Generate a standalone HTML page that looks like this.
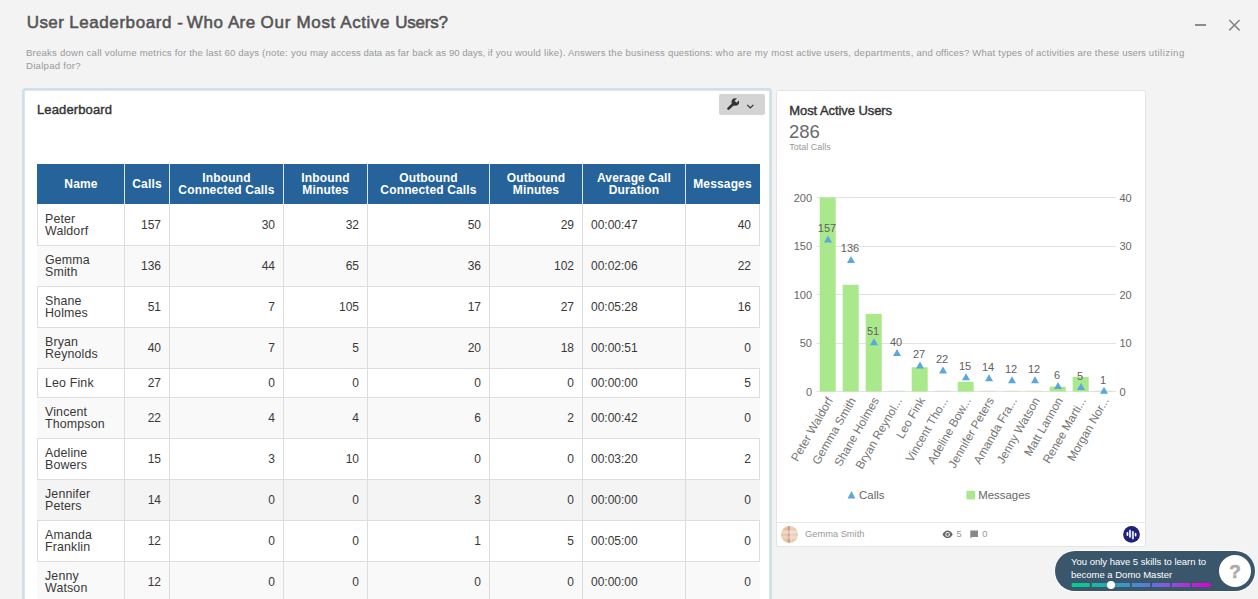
<!DOCTYPE html>
<html lang="en">
<head>
<meta charset="utf-8">
<title>User Leaderboard - Who Are Our Most Active Users?</title>
<style>
html,body{margin:0;padding:0;}
body{width:1258px;height:599px;overflow:hidden;background:#f3f3f3;font-family:"Liberation Sans",sans-serif;color:#333;position:relative;}
.abs{position:absolute;}
#title{left:26.8px;top:12px;font-size:17px;font-weight:normal;-webkit-text-stroke:0.55px #555;color:#555;white-space:nowrap;line-height:22px;}
#desc{left:26px;top:46px;width:1220px;font-size:9.6px;line-height:13px;color:#999;white-space:nowrap;}
.ds{display:inline-block;white-space:pre;vertical-align:top;}
#min{left:1195px;top:24px;width:11px;height:2px;background:#8c8c8c;}
#card1{left:24px;top:90px;width:744px;height:520px;background:#fff;border:1px solid #e2e4e6;border-radius:2px;box-shadow:0 0 0 2px #cde0ec;}
#card1 h3{position:absolute;left:12px;top:11.1px;letter-spacing:0.12px;margin:0;font-size:13px;font-weight:normal;-webkit-text-stroke:0.4px #333;color:#333;line-height:16px;white-space:nowrap;}
#wrench{left:694px;top:3px;width:46px;height:21px;background:#d4d4d4;border-radius:2px;}
#card2{left:776px;top:90px;width:368px;height:455px;background:#fff;border:1px solid #e3e5e5;border-radius:2px;}
table{position:absolute;left:12px;top:73px;border-collapse:collapse;table-layout:fixed;width:722px;font-size:12px;line-height:12px;}
th{background:#26639b;color:#fff;font-weight:bold;letter-spacing:0.15px;height:24px;padding:8px 4px;border-left:1px solid #dce6f0;text-align:center;vertical-align:middle;box-sizing:content-box;}
th:first-child{border-left:1px solid #26639b;}
th:last-child{border-right:1px solid #26639b;}
td{padding:8px 8px;border:1px solid #ddd;border-top:none;vertical-align:middle;text-align:right;color:#383838;}
td:first-child,td.l{text-align:left;}
tr.g td{background:#f9f9f9;}
tr.h td{background:#f4f4f4;}
tr.g td:last-child{border-right-color:#f9f9f9;}
tr.g td:first-child{border-left-color:#f9f9f9;}
tr.h td:last-child{border-right-color:#f4f4f4;}
tr.h td:first-child{border-left-color:#f4f4f4;}
.sb{-webkit-text-stroke:0.4px #333;}
tr.f td{padding-top:9px;}
td:first-child{font-size:12.4px;letter-spacing:0.15px;padding-left:7px;}
</style>
</head>
<body>
<div id="title" class="abs"><span class="ds" style="width:42.5px;letter-spacing:0.375px">User </span><span class="ds" style="width:107.9px;letter-spacing:0.563px">Leaderboard </span><span class="ds" style="width:9.6px;letter-spacing:-0.395px">- </span><span class="ds" style="width:41.1px;letter-spacing:0.587px">Who </span><span class="ds" style="width:32.7px;letter-spacing:0.378px">Are </span><span class="ds" style="width:36.0px;letter-spacing:0.734px">Our </span><span class="ds" style="width:43.7px;letter-spacing:0.615px">Most </span><span class="ds" style="width:55.0px;letter-spacing:0.567px">Active </span><span class="ds" style="width:51.7px;letter-spacing:-0.25px">Users?</span></div>
<div id="desc" class="abs"><span class="ds" style="width:113.7px;letter-spacing:0.205px">Breaks down call volume </span><span class="ds" style="width:122.4px;letter-spacing:0.175px">metrics for the last 60 days </span><span class="ds" style="width:47.9px;letter-spacing:0.232px">(note: you </span><span class="ds" style="width:87.8px;letter-spacing:0.018px">may access data as </span><span class="ds" style="width:51.3px;letter-spacing:0.142px">far back as </span><span class="ds" style="width:38.6px;letter-spacing:-0.038px">90 days, </span><span class="ds" style="width:80.4px;letter-spacing:0.233px">if you would like). </span><span class="ds" style="width:40.3px;letter-spacing:0.106px">Answers </span><span class="ds" style="width:17.2px;letter-spacing:0.296px">the </span><span class="ds" style="width:42.4px;letter-spacing:0.208px">business </span><span class="ds" style="width:47.7px;letter-spacing:0.118px">questions: </span><span class="ds" style="width:55.6px;letter-spacing:0.303px">who are my </span><span class="ds" style="width:25.0px;letter-spacing:0.306px">most </span><span class="ds" style="width:27.9px;letter-spacing:0.024px">active </span><span class="ds" style="width:29.8px;letter-spacing:0.143px">users, </span><span class="ds" style="width:62.7px;letter-spacing:0.310px">departments, </span><span class="ds" style="width:19.1px;letter-spacing:0.103px">and </span><span class="ds" style="width:36.5px;letter-spacing:0.104px">offices? </span><span class="ds" style="width:26.2px;letter-spacing:0.228px">What </span><span class="ds" style="width:37.7px;letter-spacing:0.159px">types of </span><span class="ds" style="width:58.7px;letter-spacing:0.181px">activities are </span><span class="ds" style="width:27.6px;letter-spacing:0.243px">these </span><span class="ds" style="width:26.3px;letter-spacing:0.027px">users </span><span class="ds" style="width:34.6px;letter-spacing:0.45px">utilizing</span><br><span style="letter-spacing:0.26px">Dialpad for?</span></div>
<div id="min" class="abs"></div>
<svg class="abs" style="left:1228px;top:19px" width="13" height="13" viewBox="0 0 13 13"><path d="M1.2 1L11.6 11.4M11.6 1L1.2 11.4" stroke="#858585" stroke-width="1.5" fill="none"/></svg>

<div id="card1" class="abs">
<h3>Leaderboard</h3>
<div id="wrench" class="abs"><svg style="position:absolute;left:7px;top:3px" width="15" height="15" viewBox="0 0 15 15"><path d="M9.3 5L2.5 11.6" stroke="#333" stroke-width="2.7" stroke-linecap="round" fill="none"/><circle cx="9.3" cy="5" r="3.8" fill="#333"/><rect x="9.7" y="3.55" width="5" height="2.9" transform="rotate(-45 9.3 5)" fill="#d4d4d4"/></svg><svg style="position:absolute;left:27px;top:9px" width="9" height="7" viewBox="0 0 9 7"><path d="M1.2 1.9L4.3 4.9L7.4 1.9" stroke="#333" stroke-width="1.3" fill="none"/></svg></div>
<table>
<colgroup><col style="width:87px"><col style="width:45px"><col style="width:114px"><col style="width:84px"><col style="width:122px"><col style="width:93px"><col style="width:103px"><col style="width:74px"></colgroup>
<tr><th>Name</th><th>Calls</th><th>Inbound<br>Connected Calls</th><th>Inbound<br>Minutes</th><th>Outbound<br>Connected Calls</th><th>Outbound<br>Minutes</th><th>Average Call<br>Duration</th><th>Messages</th></tr>
<tr class="f"><td>Peter<br>Waldorf</td><td>157</td><td>30</td><td>32</td><td>50</td><td>29</td><td class="l">00:00:47</td><td>40</td></tr>
<tr class="g"><td>Gemma<br>Smith</td><td>136</td><td>44</td><td>65</td><td>36</td><td>102</td><td class="l">00:02:06</td><td>22</td></tr>
<tr><td>Shane<br>Holmes</td><td>51</td><td>7</td><td>105</td><td>17</td><td>27</td><td class="l">00:05:28</td><td>16</td></tr>
<tr class="g"><td>Bryan<br>Reynolds</td><td>40</td><td>7</td><td>5</td><td>20</td><td>18</td><td class="l">00:00:51</td><td>0</td></tr>
<tr><td>Leo Fink</td><td>27</td><td>0</td><td>0</td><td>0</td><td>0</td><td class="l">00:00:00</td><td>5</td></tr>
<tr class="g"><td>Vincent<br>Thompson</td><td>22</td><td>4</td><td>4</td><td>6</td><td>2</td><td class="l">00:00:42</td><td>0</td></tr>
<tr><td>Adeline<br>Bowers</td><td>15</td><td>3</td><td>10</td><td>0</td><td>0</td><td class="l">00:03:20</td><td>2</td></tr>
<tr class="g h"><td>Jennifer<br>Peters</td><td>14</td><td>0</td><td>0</td><td>3</td><td>0</td><td class="l">00:00:00</td><td>0</td></tr>
<tr><td>Amanda<br>Franklin</td><td>12</td><td>0</td><td>0</td><td>1</td><td>5</td><td class="l">00:05:00</td><td>0</td></tr>
<tr class="g"><td>Jenny<br>Watson</td><td>12</td><td>0</td><td>0</td><td>0</td><td>0</td><td class="l">00:00:00</td><td>0</td></tr>
</table>
</div>

<div id="card2" class="abs"></div>
<div class="abs sb" style="left:789.3px;top:103px;font-size:13px;line-height:16px;color:#333;white-space:nowrap;letter-spacing:-0.08px;">Most Active Users</div>
<div class="abs" style="left:789px;top:120.6px;font-size:18.5px;line-height:21px;color:#6a6a6a;white-space:nowrap;">286</div>
<div class="abs" style="left:789.2px;top:142px;font-size:9px;line-height:11px;color:#999;white-space:nowrap;">Total Calls</div>
<svg class="abs" style="left:0;top:0" width="1258" height="599" viewBox="0 0 1258 599" font-family="Liberation Sans, sans-serif">
<g stroke="#e2e2e2" stroke-width="1">
<line x1="816.5" x2="1116.2" y1="197.50" y2="197.50"/>
<line x1="816.5" x2="1116.2" y1="246.5" y2="246.5"/>
<line x1="816.5" x2="1116.2" y1="294.50" y2="294.50"/>
<line x1="816.5" x2="1116.2" y1="343.5" y2="343.5"/>
<line x1="816.5" x2="1116.2" y1="391.50" y2="391.50"/>
</g>
<g font-size="11" fill="#666">
<text x="812" y="201.50" text-anchor="end">200</text><text x="1119.5" y="201.50">40</text>
<text x="812" y="250.4" text-anchor="end">150</text><text x="1119.5" y="250.4">30</text>
<text x="812" y="298.50" text-anchor="end">100</text><text x="1119.5" y="298.50">20</text>
<text x="812" y="347.4" text-anchor="end">50</text><text x="1119.5" y="347.4">10</text>
<text x="812" y="395.50" text-anchor="end">0</text><text x="1119.5" y="395.50">0</text>
</g>
<g fill="#a9e98c">
<rect x="819.7" y="197.50" width="16" height="194.00"/>
<rect x="842.7" y="284.80" width="16" height="106.70"/>
<rect x="865.7" y="313.90" width="16" height="77.60"/>
<rect x="888.7" y="390.6" width="16" height="0.5" opacity="0.6"/>
<rect x="911.7" y="367.25" width="16" height="24.25"/>
<rect x="934.7" y="390.6" width="16" height="0.5" opacity="0.6"/>
<rect x="957.7" y="381.80" width="16" height="9.70"/>
<rect x="980.7" y="390.6" width="16" height="0.5" opacity="0.6"/>
<rect x="1003.7" y="390.6" width="16" height="0.5" opacity="0.6"/>
<rect x="1026.7" y="390.6" width="16" height="0.5" opacity="0.6"/>
<rect x="1049.7" y="386.65" width="16" height="4.85"/>
<rect x="1072.7" y="376.95" width="16" height="14.55"/>
<rect x="1095.7" y="390.6" width="16" height="0.5" opacity="0.6"/>
</g>
<g fill="#5aa8dc"><path d="M824.0 242.51L832.0 242.51L828 235.51Z"/><path d="M847.0 262.88L855.0 262.88L851 255.88Z"/><path d="M870.0 345.33L878.0 345.33L874 338.33Z"/><path d="M893.0 356.00L901.0 356.00L897 349.00Z"/><path d="M916.0 368.61L924.0 368.61L920 361.61Z"/><path d="M939.0 373.46L947.0 373.46L943 366.46Z"/><path d="M962.0 380.25L970.0 380.25L966 373.25Z"/><path d="M985.0 381.22L993.0 381.22L989 374.22Z"/><path d="M1008.0 383.16L1016.0 383.16L1012 376.16Z"/><path d="M1031.0 383.16L1039.0 383.16L1035 376.16Z"/><path d="M1054.0 388.98L1062.0 388.98L1058 381.98Z"/><path d="M1077.0 389.95L1085.0 389.95L1081 382.95Z"/><path d="M1100.0 393.83L1108.0 393.83L1104 386.83Z"/></g>
<g font-size="11" fill="#606060" text-anchor="middle"><text x="827" y="232.31">157</text><text x="850" y="251.88">136</text><text x="873" y="335.13">51</text><text x="896" y="345.80">40</text><text x="919" y="358.41">27</text><text x="942" y="363.26">22</text><text x="965" y="370.05">15</text><text x="988" y="371.02">14</text><text x="1011" y="372.96">12</text><text x="1034" y="372.96">12</text><text x="1057" y="378.78">6</text><text x="1080" y="379.75">5</text><text x="1103" y="383.63">1</text></g>
<g font-size="11.8" fill="#757575" text-anchor="end">
<text transform="translate(833.4 400.2) rotate(-60)">Peter Waldorf</text>
<text transform="translate(856.4 400.2) rotate(-60)">Gemma Smith</text>
<text transform="translate(879.4 400.2) rotate(-60)">Shane Holmes</text>
<text transform="translate(902.4 400.2) rotate(-60)">Bryan Reynol...</text>
<text transform="translate(925.4 400.2) rotate(-60)">Leo Fink</text>
<text transform="translate(948.4 400.2) rotate(-60)">Vincent Tho...</text>
<text transform="translate(971.4 400.2) rotate(-60)">Adeline Bow...</text>
<text transform="translate(994.4 400.2) rotate(-60)">Jennifer Peters</text>
<text transform="translate(1017.4 400.2) rotate(-60)">Amanda Fra...</text>
<text transform="translate(1040.4 400.2) rotate(-60)">Jenny Watson</text>
<text transform="translate(1063.4 400.2) rotate(-60)">Matt Lannon</text>
<text transform="translate(1086.4 400.2) rotate(-60)">Renee Marti...</text>
<text transform="translate(1109.4 400.2) rotate(-60)">Morgan Nor...</text>
</g>
<path d="M847.6 498.4L855.4 498.4L851.5 491.1Z" fill="#5aa8dc"/>
<text x="859.1" y="499.4" font-size="11.4" fill="#666">Calls</text>
<rect x="966.4" y="490.8" width="8.7" height="8.6" fill="#a9e98c"/>
<text x="978.3" y="499.4" font-size="11.4" fill="#666">Messages</text>
</svg>
<div class="abs" style="left:777px;top:522px;width:368px;height:1px;background:#e8e8e8;"></div>
<div class="abs" style="left:781px;top:526px;width:17px;height:17px;border-radius:50%;background:linear-gradient(180deg,rgba(255,255,255,0) 0,rgba(255,255,255,0) 22%,rgba(255,255,255,0.38) 30%,rgba(255,255,255,0.38) 42%,rgba(255,255,255,0) 52%,rgba(255,255,255,0.3) 62%,rgba(255,255,255,0.3) 72%,rgba(255,255,255,0) 82%),linear-gradient(90deg,#e5bf9c 0,#e6c3a2 36%,#cf9c92 43%,#cf9c92 50%,#ead0b6 56%,#e6c4a4 100%);"></div>
<div class="abs" style="left:805px;top:528px;font-size:9.3px;line-height:12px;color:#999;white-space:nowrap;">Gemma Smith</div>
<svg class="abs" style="left:942px;top:530px" width="12" height="9" viewBox="0 0 12 9"><path d="M0.5 4.4C2 1.8 3.8 0.6 5.6 0.6S9.2 1.8 10.7 4.4C9.2 7 7.4 8.1 5.6 8.1S2 7 0.5 4.4Z" fill="#666"/><circle cx="5.6" cy="4.4" r="2.3" fill="#f4f4f4"/><circle cx="5.6" cy="4.4" r="1.3" fill="#666"/></svg>
<div class="abs" style="left:956.5px;top:528px;font-size:9.3px;line-height:12px;color:#999;">5</div>
<svg class="abs" style="left:970px;top:530px" width="9" height="9" viewBox="0 0 9 9"><path d="M0.3 0.6H8V6.9H2L0.3 8.4Z" fill="#888"/></svg>
<div class="abs" style="left:982.3px;top:528px;font-size:9.3px;line-height:12px;color:#999;">0</div>
<svg class="abs" style="left:1122px;top:525px" width="19" height="19" viewBox="1122 525 19 19"><circle cx="1131.5" cy="534.4" r="8.35" fill="#20227a"/><rect x="1126.55" y="532" width="1.75" height="4.1" rx="0.8" fill="#fff"/><rect x="1129" y="529.8" width="2" height="8.05" rx="0.8" fill="#d6d8ec"/><rect x="1131.85" y="531.1" width="2.05" height="8.3" rx="0.8" fill="#d6d8ec"/><rect x="1134.75" y="532.85" width="1.65" height="3.65" rx="0.8" fill="#fff"/></svg>

<div class="abs" style="left:1055px;top:551px;width:200px;height:40px;border-radius:20px;background:#3a566b;box-shadow:0 0 0 1px rgba(255,255,255,0.75);"></div>
<div class="abs" style="left:1071px;top:555px;font-size:9.5px;line-height:13px;color:#fff;white-space:nowrap;letter-spacing:-0.01px;">You only have 5 skills to learn to<br>become a Domo Master</div>
<svg class="abs" style="left:1060px;top:578px" width="160" height="14" viewBox="1060 578 160 14">
<defs><linearGradient id="pg" gradientUnits="userSpaceOnUse" x1="1071" x2="1211" y1="0" y2="0"><stop offset="0" stop-color="#00d18c"/><stop offset="0.3" stop-color="#2aa3b5"/><stop offset="0.5" stop-color="#4a86d6"/><stop offset="0.7" stop-color="#8a55d6"/><stop offset="1" stop-color="#e000d0"/></linearGradient></defs>
<g fill="url(#pg)"><rect x="1071.70" y="583" width="18.2" height="4" rx="1"/><rect x="1091.75" y="583" width="18.2" height="4"/><rect x="1111.80" y="583" width="18.2" height="4"/><rect x="1131.85" y="583" width="18.2" height="4"/><rect x="1151.90" y="583" width="18.2" height="4"/><rect x="1171.95" y="583" width="18.2" height="4"/><rect x="1192" y="583" width="19.2" height="4" rx="2"/><rect x="1192" y="583" width="10" height="4"/></g>
<circle cx="1111" cy="585" r="4" fill="#fff"/>
</svg>
<div class="abs" style="left:1219px;top:555px;width:32px;height:32px;border-radius:50%;background:#fff;text-align:center;font-size:19px;font-weight:bold;line-height:34px;color:#aaa;-webkit-text-stroke:0.5px #aaa;">?</div>
</body>
</html>
